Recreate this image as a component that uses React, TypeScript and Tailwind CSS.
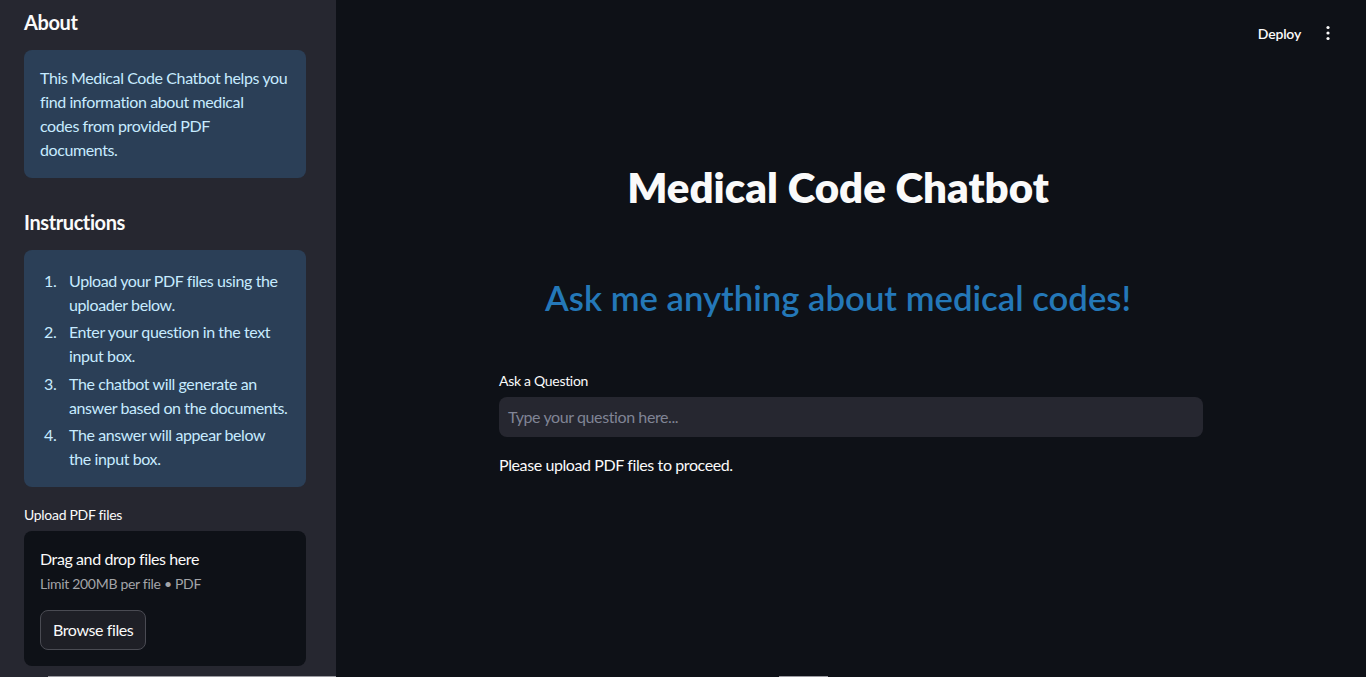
import React from 'react';

const font = { fontFamily: '"Lato", "Noto Sans", sans-serif' };

const steps = [
  'Upload your PDF files using the uploader below.',
  'Enter your question in the text input box.',
  'The chatbot will generate an answer based on the documents.',
  'The answer will appear below the input box.',
];

export default function App() {
  return (
    <div className="relative flex h-[677px] w-[1366px] overflow-hidden bg-[#0e1117] text-[#fafafa] tracking-[-0.4px]" style={font}>
      {/* Sidebar */}
      <aside className="flex w-[336px] shrink-0 flex-col bg-[#262730] pl-6 pr-[30px]">
        <h2 className="mt-[9px] text-[20px] font-bold leading-[26px] tracking-[-0.4px]">About</h2>
        <div className="mt-[15px] rounded-lg bg-[#2b3f57] px-4 py-[16px] text-[16px] leading-6 text-[#c7ebff]">
          This Medical Code Chatbot helps you
          <br />
          find information about medical
          <br />
          codes from provided PDF
          <br />
          documents.
        </div>

        <h2 className="mt-[31px] text-[20px] font-bold leading-[26px] tracking-[-0.4px]">Instructions</h2>
        <div className="mt-[15px] rounded-lg bg-[#2b3f57] pb-[16px] pl-4 pr-4 pt-[19px] text-[16px] leading-6 text-[#c7ebff]">
          <ol className="flex flex-col gap-[3.4px]">
            {steps.map((s, i) => (
              <li key={s} className="flex">
                <span className="w-[29px] shrink-0 pl-[4px]">{i + 1}.</span>
                <span>{s}</span>
              </li>
            ))}
          </ol>
        </div>

        <label className="mt-[18px] text-[14px] leading-5 tracking-[-0.3px]">Upload PDF files</label>
        <div className="mt-[6px] flex flex-col items-start rounded-lg bg-[#0e1117] px-4 pb-4 pt-[16px]">
          <div className="text-[16px] leading-6">Drag and drop files here</div>
          <div className="mt-[3px] text-[14px] leading-5 tracking-[-0.3px] text-[#a3a4a8]">Limit 200MB per file • PDF</div>
          <button className="mt-[16px] h-[40px] rounded-lg border border-[#4a4b53] bg-[#1e1f26] px-[12px] text-[16px] leading-6 text-[#fafafa]">
            Browse files
          </button>
        </div>
      </aside>

      {/* Main */}
      <main className="flex flex-1 flex-col">
        <header className="flex h-[66px] items-center justify-end gap-[19px] pr-[30px]">
          <span className="text-[14px] font-semibold tracking-[-0.2px]">Deploy</span>
          <svg width="16" height="16" viewBox="0 0 16 16" className="fill-[#fafafa]">
            <circle cx="8" cy="2.5" r="1.6" />
            <circle cx="8" cy="8" r="1.6" />
            <circle cx="8" cy="13.5" r="1.6" />
          </svg>
        </header>

        <div className="mx-auto flex w-[704px] flex-col">
          <h1 className="mt-[95px] pr-[26px] text-center text-[42px] font-extrabold leading-[52px] tracking-normal">Medical Code Chatbot</h1>
          <h3 className="mt-[63px] pr-[26px] text-center text-[34.7px] font-semibold leading-[44px] tracking-normal text-[#2478b8]">
            Ask me anything about medical codes!
          </h3>
          <label className="mt-[51px] text-[14px] leading-5 tracking-[-0.3px]">Ask a Question</label>
          <div className="mt-[6px] flex h-[40px] items-center rounded-lg bg-[#262730] px-[9px] text-[16px] text-[#808495]">
            Type your question here...
          </div>
          <p className="mt-[16px] text-[16px] leading-6">Please upload PDF files to proceed.</p>
        </div>
      </main>

      {/* scrollbar traces */}
      <div className="absolute bottom-0 left-[48px] h-[1px] w-[288px] bg-[#9a9aa0]" />
      <div className="absolute bottom-0 left-[779px] h-[1px] w-[49px] bg-[#9a9aa0]" />
    </div>
  );
}
